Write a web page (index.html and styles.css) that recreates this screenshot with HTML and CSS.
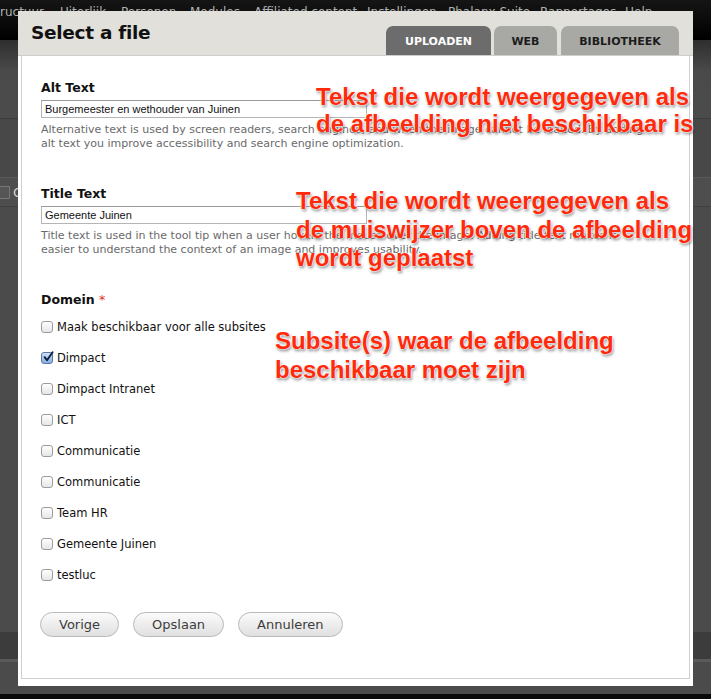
FILE: index.html
```html
<!DOCTYPE html>
<html lang="nl">
<head>
<meta charset="utf-8">
<title>Select a file</title>
<link rel="stylesheet" href="styles.css">
</head>
<body>
<div class="page">
  <nav class="topnav">
    <span class="nav-item n1">ructuur</span>
    <span class="nav-item n2">Uiterlijk</span>
    <span class="nav-item n3">Personen</span>
    <span class="nav-item n4">Modules</span>
    <span class="nav-item n5">Affiliated content</span>
    <span class="nav-item n6">Instellingen</span>
    <span class="nav-item n7">Phalanx Suite</span>
    <span class="nav-item n8">Rapportages</span>
    <span class="nav-item n9">Help</span>
  </nav>
  <div class="bg-band bg-a"></div>
  <div class="bg-band bg-b"></div>
  <div class="bg-band bg-c"><span class="bg-check"></span><span class="bg-letter">C</span></div>
  <div class="bg-band bg-d"></div>
  <div class="bg-band bg-e"></div>
  <div class="bg-band bg-f"></div>
  <div class="bg-band bg-g"></div>
  <div class="bg-band bg-h"></div>
</div>

<div class="modal">
  <header class="modal-head">
    <h1 class="modal-title">Select a file</h1>
    <div class="tabs">
      <span class="tab tab-active">UPLOADEN</span>
      <span class="tab tab-web">WEB</span>
      <span class="tab tab-lib">BIBLIOTHEEK</span>
    </div>
  </header>
  <div class="modal-body">
    <div class="modal-inner">
      <div class="field">
        <div class="label">Alt Text</div>
        <div class="input">Burgemeester en wethouder van Juinen</div>
        <div class="desc">Alternative text is used by screen readers, search engines, and when the image cannot be loaded. By adding<br>alt text you improve accessibility and search engine optimization.</div>
      </div>
      <div class="field">
        <div class="label">Title Text</div>
        <div class="input">Gemeente Juinen</div>
        <div class="desc">Title text is used in the tool tip when a user hovers the mouse over the image. Adding title text makes it<br>easier to understand the context of an image and improves usability.</div>
      </div>
      <div class="field-domain">
        <div class="label">Domein <span class="req">*</span></div>
        <ul class="checks">
          <li class="check-row"><span class="cb"></span>Maak beschikbaar voor alle subsites</li>
          <li class="check-row"><span class="cb cb-on"><svg viewBox="0 0 12 12" width="12" height="12"><path d="M2.6 6.2 L5 9.2 L10.6 1.2" fill="none" stroke="#0d1e3c" stroke-width="1.9" stroke-linecap="round" stroke-linejoin="round"/></svg></span>Dimpact</li>
          <li class="check-row"><span class="cb"></span>Dimpact Intranet</li>
          <li class="check-row"><span class="cb"></span>ICT</li>
          <li class="check-row"><span class="cb"></span>Communicatie</li>
          <li class="check-row"><span class="cb"></span>Communicatie</li>
          <li class="check-row"><span class="cb"></span>Team HR</li>
          <li class="check-row"><span class="cb"></span>Gemeente Juinen</li>
          <li class="check-row"><span class="cb"></span>testluc</li>
        </ul>
      </div>
      <div class="buttons">
        <span class="btn">Vorige</span>
        <span class="btn">Opslaan</span>
        <span class="btn">Annuleren</span>
      </div>
    </div>
  </div>
</div>

<div class="note note-1">Tekst die wordt weergegeven als<br>de afbeelding niet beschikbaar is</div>
<div class="note note-2">Tekst die wordt weergegeven als<br>de muiswijzer boven de afbeelding<br>wordt geplaatst</div>
<div class="note note-3">Subsite(s) waar de afbeelding<br>beschikbaar moet zijn</div>
</body>
</html>
```

FILE: styles.css
```css
html, body {
  margin: 0;
  padding: 0;
}
body {
  width: 711px;
  height: 699px;
  overflow: hidden;
  background: #4b4b4b;
  position: relative;
  font-family: "DejaVu Sans", sans-serif;
}

/* ---------- background page ---------- */
.page {
  display: flex;
  flex-direction: column;
  height: 699px;
}
.topnav {
  height: 40px;
  flex: none;
  background: linear-gradient(#151515, #000);
  display: flex;
  align-items: flex-start;
  padding-top: 4px;
  box-sizing: border-box;
  font-size: 12px;
  line-height: 16px;
  color: #b0b0b0;
  white-space: nowrap;
}
.nav-item { display: block; flex: none; }
.n1 { width: 60px; }
.n2 { width: 61px; }
.n3 { width: 69px; }
.n4 { width: 64px; }
.n5 { width: 113px; }
.n6 { width: 81px; }
.n7 { width: 92px; }
.n8 { width: 85px; }
.bg-band { flex: none; }
.bg-a { height: 78px; background: linear-gradient(#2e2e2e, #4a4a4a 40%, #4b4b4b); }
.bg-b { height: 58px; background: #484848; border-top: 1px solid #3c3c3c; }
.bg-c {
  height: 28px;
  background: #4e4e4e;
  border-top: 1px solid #585858;
  border-bottom: 1px solid #404040;
  display: flex;
  align-items: center;
  gap: 3px;
  color: #ddd;
  font-size: 13px;
}
.bg-check {
  width: 9px;
  height: 11px;
  border: 1px solid #777;
  border-left: none;
  background: #555;
}
.bg-letter { color: #d8d8d8; }
.bg-d { height: 425px; background: #4b4b4b; }
.bg-e { height: 27px; background: #3c3c3c; }
.bg-f { height: 3px; background: #5a5a5a; }
.bg-g { height: 32px; background: #4b4b4b; }
.bg-h { flex: 1; background: #0a0a0a; }

/* ---------- modal ---------- */
.modal {
  position: absolute;
  left: 18px;
  top: 11px;
  width: 675px;
  height: 675px;
  background: #fff;
  display: flex;
  flex-direction: column;
}
.modal-head {
  height: 44px;
  flex: none;
  background: #e1e0da;
  border-bottom: 1px solid #cdcdcd;
  display: flex;
  align-items: flex-end;
  justify-content: space-between;
  padding: 0 14px 0 13px;
}
.modal-title {
  margin: 0;
  align-self: flex-start;
  font-size: 18.5px;
  line-height: 22px;
  padding-top: 11px;
  font-weight: bold;
  color: #111;
  letter-spacing: -0.3px;
}
.tabs {
  display: flex;
  gap: 3px;
}
.tab {
  height: 29px;
  box-sizing: border-box;
  border-radius: 7px 7px 0 0;
  display: flex;
  align-items: center;
  justify-content: center;
  font-size: 11px;
  font-weight: bold;
  color: #1c1c1c;
  background: #a8a8a5;
  padding-top: 2px;
}
.tab-active { width: 105px; background: #6c6c6c; color: #fff; }
.tab-web { width: 63px; }
.tab-lib { width: 118px; margin-left: 1px; }

.modal-body {
  flex: 1;
  display: flex;
  padding: 0 3px 7px;
}
.modal-inner {
  flex: 1;
  border: 1px solid #cfcfcf;
  border-top: none;
  padding: 24px 0 0 19px;
}

.field { margin-bottom: 36px; }
.label {
  font-size: 12.5px;
  line-height: 16px;
  font-weight: bold;
  color: #111;
}
.req { color: #e0301e; font-weight: normal; }
.input {
  margin-top: 4px;
  width: 326px;
  height: 18px;
  box-sizing: border-box;
  border: 1px solid #b5b5b5;
  border-top-color: #9a9a9a;
  padding: 1px 0 0 3px;
  font-family: "Liberation Sans", Arial, sans-serif;
  font-size: 11px;
  line-height: 14px;
  color: #111;
}
.desc {
  margin-top: 5px;
  font-size: 11px;
  line-height: 13.5px;
  color: #6a6a6a;
  white-space: nowrap;
}

.checks {
  list-style: none;
  margin: 3px 0 0;
  padding: 0;
}
.check-row {
  height: 31px;
  display: flex;
  align-items: center;
  gap: 4px;
  font-size: 11.5px;
  color: #111;
}
.cb {
  width: 12px;
  height: 12px;
  box-sizing: border-box;
  border: 1px solid #9c9c9c;
  border-radius: 3px;
  background: linear-gradient(#fefefe, #e6e6e6);
  position: relative;
  flex: none;
}
.cb-on {
  border-color: #5b76a7;
  background: linear-gradient(#cfe0f6, #86aee4);
}
.cb-on svg {
  position: absolute;
  left: 0;
  top: -2px;
}

.buttons {
  display: flex;
  gap: 14px;
  margin-top: 22px;
  margin-left: -1px;
}
.btn {
  height: 25px;
  box-sizing: border-box;
  padding: 0 18px;
  border: 1px solid #b9b9b9;
  border-radius: 13px;
  background: linear-gradient(#fbfbfb, #ececec 55%, #e0e0e0);
  display: flex;
  align-items: center;
  font-size: 13px;
  color: #3c3c3c;
}

/* ---------- annotations ---------- */
.note {
  position: absolute;
  font-family: "Liberation Sans", Arial, sans-serif;
  font-weight: bold;
  font-size: 24px;
  color: #ff2a0c;
  white-space: nowrap;
  text-shadow: 0 0 1px #fff, 0 0 2px #fff, 0 0 2px #fff, 1px 2px 3px rgba(0,0,0,0.5);
}
.note-1 { left: 316px; top: 83px; line-height: 27px; }
.note-2 { left: 296px; top: 187px; line-height: 28.5px; }
.note-3 { left: 275px; top: 326px; line-height: 29px; }
```
